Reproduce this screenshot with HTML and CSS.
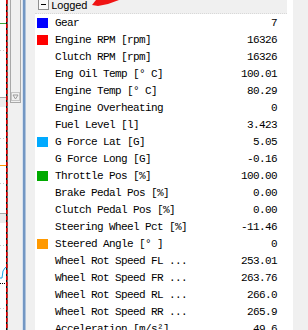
FILE: index.html
```html
<!DOCTYPE html>
<html lang="en">
<head>
    <meta charset="UTF-8">
    <title>Logged channels</title>
    <link rel="stylesheet" href="styles.css">
</head>
<body>
    <div class="chart">
        <svg width="8" height="330" viewBox="0 0 8 330">
            <line x1="0" y1="23.5" x2="6" y2="23.5" stroke="#3aa63a" />
            <line x1="0" y1="50.5" x2="6" y2="50.5" stroke="#c8c8c8" stroke-dasharray="1 2" />
            <rect x="0" y="97" width="6" height="10" fill="#ececec" />
            <line x1="0" y1="97.5" x2="6" y2="97.5" stroke="#a8a8a8" />
            <line x1="0" y1="138.5" x2="6" y2="138.5" stroke="#c8c8c8" stroke-dasharray="1 2" />
            <line x1="0" y1="165.5" x2="6" y2="165.5" stroke="#ff9900" />
            <line x1="0" y1="183.5" x2="6" y2="183.5" stroke="#c8c8c8" stroke-dasharray="1 2" />
            <rect x="0" y="213" width="6" height="10" fill="#ececec" />
            <line x1="0" y1="213.5" x2="6" y2="213.5" stroke="#a8a8a8" />
            <line x1="0" y1="245.5" x2="6" y2="245.5" stroke="#c8c8c8" stroke-dasharray="1 2" />
            <polyline points="0,278 2,278 3,271 5,268 6,267" fill="none" stroke="#1aa3e8" />
            <line x1="0" y1="283.5" x2="6" y2="283.5" stroke="#000" stroke-dasharray="1 1" />
            <line x1="0" y1="308.5" x2="6" y2="308.5" stroke="#c8c8c8" stroke-dasharray="1 2" />
            <line x1="6.8" y1="0" x2="6.8" y2="330" stroke="#000" stroke-width="1.5" />
            <line x1="6.8" y1="0" x2="6.8" y2="330" stroke="#e00000" stroke-width="1.6" stroke-dasharray="4 2" />
        </svg>
    </div>
    <div class="pane">
        <div class="scrollbar">
            <svg class="scroll-arrow" width="9" height="9" viewBox="0 0 9 9">
                <rect x="0.5" y="0.5" width="8" height="8" fill="none" stroke="#c4c4c4" />
                <polygon points="2,3 7,3 4.5,7" fill="none" stroke="#9a9a9a" />
            </svg>
        </div>
    </div>
    <div class="splitter"></div>
    <div class="gap"></div>
    <div class="panel">
        <div class="group-header">
            <span class="toggle"></span>
            <span class="group-title">Logged</span>
        </div>
        <div class="rows">
            <div class="row"><span class="swatch blue"></span><span class="label">Gear</span><span class="value">7</span></div>
            <div class="row"><span class="swatch red"></span><span class="label">Engine RPM [rpm]</span><span class="value">16326</span></div>
            <div class="row"><span class="swatch"></span><span class="label">Clutch RPM [rpm]</span><span class="value">16326</span></div>
            <div class="row"><span class="swatch"></span><span class="label">Eng Oil Temp [° C]</span><span class="value">100.01</span></div>
            <div class="row"><span class="swatch"></span><span class="label">Engine Temp [° C]</span><span class="value">80.29</span></div>
            <div class="row"><span class="swatch"></span><span class="label">Engine Overheating</span><span class="value">0</span></div>
            <div class="row"><span class="swatch"></span><span class="label">Fuel Level [l]</span><span class="value">3.423</span></div>
            <div class="row"><span class="swatch cyan"></span><span class="label">G Force Lat [G]</span><span class="value">5.05</span></div>
            <div class="row"><span class="swatch"></span><span class="label">G Force Long [G]</span><span class="value">-0.16</span></div>
            <div class="row"><span class="swatch green"></span><span class="label">Throttle Pos [%]</span><span class="value">100.00</span></div>
            <div class="row"><span class="swatch"></span><span class="label">Brake Pedal Pos [%]</span><span class="value">0.00</span></div>
            <div class="row"><span class="swatch"></span><span class="label">Clutch Pedal Pos [%]</span><span class="value">0.00</span></div>
            <div class="row"><span class="swatch"></span><span class="label">Steering Wheel Pct [%]</span><span class="value">-11.46</span></div>
            <div class="row"><span class="swatch orange"></span><span class="label">Steered Angle [° ]</span><span class="value">0</span></div>
            <div class="row"><span class="swatch"></span><span class="label">Wheel Rot Speed FL ...</span><span class="value">253.01</span></div>
            <div class="row"><span class="swatch"></span><span class="label">Wheel Rot Speed FR ...</span><span class="value">263.76</span></div>
            <div class="row"><span class="swatch"></span><span class="label">Wheel Rot Speed RL ...</span><span class="value">266.0</span></div>
            <div class="row"><span class="swatch"></span><span class="label">Wheel Rot Speed RR ...</span><span class="value">265.9</span></div>
            <div class="row"><span class="swatch"></span><span class="label">Acceleration [m/s²]</span><span class="value">49.6</span></div>
        </div>
    </div>
    <div class="edge"></div>
    <svg class="callout" width="40" height="8" viewBox="0 0 40 8">
        <polygon points="2,5 6,0 29,0 18,4 8,6" fill="#f01414" />
    </svg>
</body>
</html>
```

FILE: styles.css
```css
/* Page */
body {
    margin: 0;
    width: 308px;
    height: 330px;
    overflow: hidden;
    display: flex;
    position: relative;
    background-color: #f0f0f0;
    font-family: "Liberation Mono", monospace;
    font-size: 11px;
    letter-spacing: -0.6px;
    color: #000;
}

/* Chart sliver on the left */
.chart {
    width: 8px;
    flex-shrink: 0;
    background: #fff;
}

.chart svg {
    display: block;
}

/* Scroll pane */
.pane {
    width: 14px;
    flex-shrink: 0;
    background: #f0f0f0;
}

.scrollbar {
    box-sizing: border-box;
    width: 11px;
    height: 106px;
    margin: -3px 0 0 2px;
    border: 1px solid #a8a8a8;
    background: #f0f0f0;
    display: flex;
    align-items: flex-end;
    justify-content: center;
    padding-bottom: 1px;
}

.scroll-arrow {
    display: block;
}

.splitter {
    width: 4px;
    flex-shrink: 0;
    background: linear-gradient(to right, #d7e1ee 0, #d7e1ee 1px, #7397c3 1px, #7397c3 3px, #aec3dc 3px);
}

.gap {
    width: 9px;
    flex-shrink: 0;
}

/* Channel list */
.panel {
    width: 258px;
    flex-shrink: 0;
    background: #fff;
}

.group-header {
    height: 16px;
    margin: -2px 6px 0 0;
    padding-left: 3px;
    display: flex;
    align-items: center;
    background: #f0f0f0;
    border-bottom: 1px dotted #d8d8d8;
    box-sizing: border-box;
}

.toggle {
    box-sizing: border-box;
    width: 11px;
    height: 11px;
    margin-top: -2px;
    border: 1px solid #8f8f8f;
    background: #fafafa;
    position: relative;
}

.toggle::after {
    content: "";
    position: absolute;
    left: 2px;
    top: 4px;
    width: 5px;
    height: 1px;
    background: #000;
}

.group-title {
    margin-left: 2px;
}

.row {
    height: 17px;
    display: flex;
    align-items: center;
}

.swatch {
    width: 11px;
    height: 10px;
    margin: 0 7px 0 2px;
    flex-shrink: 0;
}

.blue { background: #0000ff; }
.red { background: #ff0000; }
.cyan { background: #00aaff; }
.green { background: #00aa00; }
.orange { background: #ff9900; }

.label {
    flex: 1;
    white-space: pre;
}

.value {
    padding-right: 16px;
    white-space: pre;
}

.edge {
    flex: 1;
    background: #f0f0f0;
}

/* Red annotation arrow tail */
.callout {
    position: absolute;
    left: 90px;
    top: 0;
}
```
